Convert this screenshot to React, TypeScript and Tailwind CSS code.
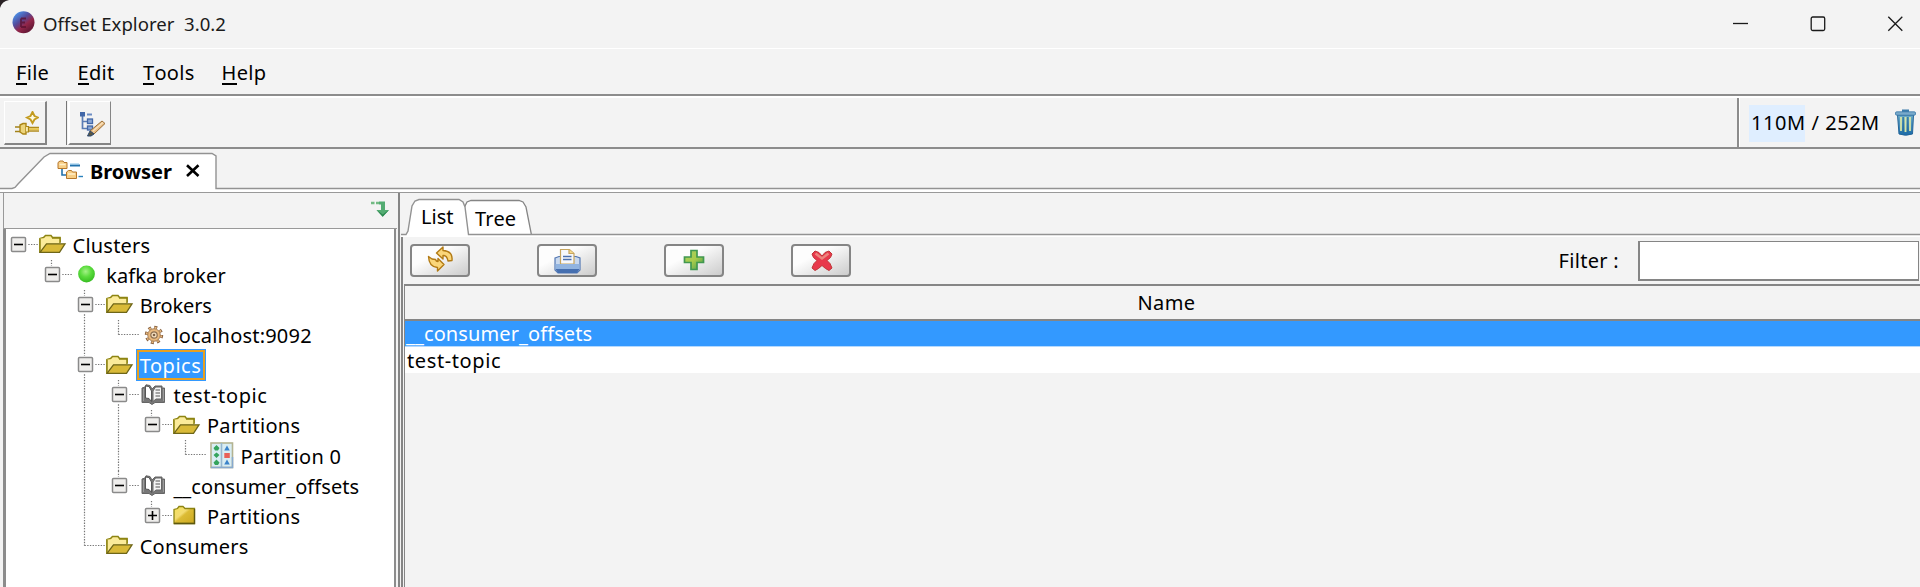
import React from 'react';

type IconKind = 'open' | 'closed' | 'green' | 'gear' | 'book' | 'partition';

interface TreeItem {
  label: string;
  icon: IconKind;
  // one flag per ancestor column: whether its vertical guide passes through this row
  guides: boolean[];
  last?: boolean;
  toggle?: 'minus' | 'plus';
  selected?: boolean;
  tracking?: string;
}

const TREE: TreeItem[] = [
  { label: 'Clusters', icon: 'open', guides: [], toggle: 'minus' },
  { label: 'kafka broker', icon: 'green', guides: [false], last: true, toggle: 'minus', tracking: 'tracking-[0.1px]' },
  { label: 'Brokers', icon: 'open', guides: [false, false], toggle: 'minus', tracking: 'tracking-[-0.1px]' },
  { label: 'localhost:9092', icon: 'gear', guides: [false, false, true], last: true },
  { label: 'Topics', icon: 'open', guides: [false, false], toggle: 'minus', selected: true, tracking: 'tracking-[0.5px]' },
  { label: 'test-topic', icon: 'book', guides: [false, false, true], toggle: 'minus', tracking: 'tracking-[0.6px]' },
  { label: 'Partitions', icon: 'open', guides: [false, false, true, true], last: true, toggle: 'minus', tracking: 'tracking-[0.3px]' },
  { label: 'Partition 0', icon: 'partition', guides: [false, false, true, true, false], last: true, tracking: 'tracking-[0.3px]' },
  { label: '__consumer_offsets', icon: 'book', guides: [false, false, true], last: true, toggle: 'minus', tracking: 'tracking-[0.08px]' },
  { label: 'Partitions', icon: 'closed', guides: [false, false, true, false], last: true, toggle: 'plus', tracking: 'tracking-[0.3px]' },
  { label: 'Consumers', icon: 'open', guides: [false, false], last: true },
];

export default function App() {
  return (
    <div className="flex h-[587px] w-[1920px] flex-col overflow-hidden bg-[#f3f3f3] font-['Noto_Sans','Noto_Sans_CJK_SC',sans-serif] text-[20px] leading-none text-black">
      <TitleBar />
      <MenuBar />
      <Toolbar />
      <TabStrip />
      <div className="flex min-h-0 flex-1">
        <TreePanel />
        <ListPanel />
      </div>
    </div>
  );
}

function TitleBar() {
  return (
    <header className="relative flex h-[49px] shrink-0 items-center border-b border-white pl-[12px] text-[18.6px] text-[#1b1b1b]">
      <svg className="absolute top-0 left-0" width="10" height="10">
        <path d="M0 0H9Q2 1 0 8Z" fill="#2a2225" />
      </svg>
      <svg className="mb-[3px] shrink-0" width="24" height="24" viewBox="0 0 24 24">
        <defs>
          <linearGradient id="ball" x1="0.15" y1="0.1" x2="0.75" y2="0.85">
            <stop offset="0" stopColor="#4a90e8" />
            <stop offset="0.4" stopColor="#534c9c" />
            <stop offset="0.7" stopColor="#93264a" />
            <stop offset="1" stopColor="#6a1a38" />
          </linearGradient>
        </defs>
        <circle cx="11.5" cy="11.2" r="11" fill="url(#ball)" />
        <path d="M9 7.5V16M9 7.5H14M9 11.5H13M9 16H14" stroke="#5c1231" strokeWidth="1.8" fill="none" opacity="0.8" />
      </svg>
      <h1 className="ml-[7px]">Offset Explorer&nbsp; 3.0.2</h1>
      <div className="absolute top-0 right-0 flex h-12 items-center pr-[17px]">
        <svg width="170" height="16" viewBox="0 0 170 16" fill="none" stroke="#1a1a1a" strokeWidth="1.3">
          <path d="M0 7.5H15" />
          <rect x="78.2" y="1" width="13.5" height="13.5" rx="1.5" />
          <path d="M155.3 0.700L169.3 14.700M169.3 0.700L155.3 14.700" />
        </svg>
      </div>
    </header>
  );
}

function MenuBar() {
  return (
    <nav className="flex h-[47px] shrink-0 items-center border-b-2 border-[#8c8c8c] pt-[3px] pl-[16px] tracking-[0.3px]">
      <MenuItem letter="F" rest="ile" className="w-[61.5px]" />
      <MenuItem letter="E" rest="dit" className="w-[65.5px]" />
      <MenuItem letter="T" rest="ools" className="w-[78.5px]" />
      <MenuItem letter="H" rest="elp" className="w-[60px]" />
    </nav>
  );
}

function MenuItem({ letter, rest, className }: { letter: string; rest: string; className: string }) {
  return (
    <button className={`flex text-left ${className}`}>
      <span className="-mb-[1px] h-[22px] border-b-2 border-black">{letter}</span>
      <span>{rest}</span>
    </button>
  );
}

function Toolbar() {
  return (
    <div className="flex h-[53px] shrink-0 border-t-2 border-b-2 border-t-white border-b-[#8c8c8c]">
      <div className="flex flex-1 items-start border-r-2 border-[#8c8c8c] pt-[3px] pl-[4px]">
        <button className="flex h-[44px] w-[43px] items-center justify-center border-t border-r-2 border-b-2 border-l border-t-white border-r-[#858585] border-b-[#858585] border-l-white">
          <PlugIcon />
        </button>
        <div className="ml-[19px] h-[44px] w-px bg-[#777]" />
        <button className="ml-px flex h-[44px] w-[43px] items-center justify-center border-t border-r border-b-2 border-l-2 border-t-white border-r-[#858585] border-b-[#858585] border-l-white">
          <TreeEditIcon />
        </button>
      </div>
      <div className="flex w-[181px] items-center border-l border-white pl-[9px]">
        <div className="mt-[1px] flex h-[37px] w-[56px] items-center bg-[#dfeeff] pl-[2px] whitespace-pre tracking-[0.55px]">
          110M / 252M
        </div>
        <svg className="mb-[1px] ml-[90px]" width="21" height="27" viewBox="0 0 21 27">
          <defs>
            <linearGradient id="can" x1="0" y1="0" x2="0" y2="1">
              <stop offset="0" stopColor="#6eadc8" />
              <stop offset="1" stopColor="#1a6aa8" />
            </linearGradient>
          </defs>
          <path d="M2.5 6H18.5L17.5 25Q10.5 27.5 4 25Z" fill="url(#can)" stroke="#24669a" />
          <path d="M6 8V22M10.5 8V23M15 8V22" stroke="#d6e5a8" strokeWidth="1.8" />
          <path d="M8.2 8V24M12.8 8V24" stroke="#256b96" strokeWidth="0.9" />
          <rect x="7" y="0.5" width="7" height="3" fill="#3c7cab" />
          <rect x="0.5" y="2.8" width="20" height="3.4" rx="1.2" fill="#79aacb" stroke="#3677a8" strokeWidth="0.8" />
        </svg>
      </div>
    </div>
  );
}

function TabStrip() {
  return (
    <div className="relative h-[44px] shrink-0 border-b border-[#999]">
      <svg className="absolute top-0 left-0" width="1920" height="43">
        <path d="M0 39.5H12L15 38.5L18 35L44 8L50 4.5H212L216 7V39.5H1920V43H0Z" fill="#fff" />
        <path d="M0 39.5H12L15 38.5L18 35L44 8L50 4.5H212L216 7V39.5H1920" fill="none" stroke="#929292" strokeWidth="1.4" />
      </svg>
      <div className="relative flex h-full items-start pt-[11px] pl-[57px]">
        <svg width="27" height="21" viewBox="0 0 27 21">
          <path d="M5 7V15H10" fill="none" stroke="#2272ad" strokeWidth="1.6" />
          <path d="M13 5.5H23" stroke="#2272ad" strokeWidth="2" />
          <path d="M13 4H22" stroke="#8cc4e9" strokeWidth="1" />
          <path d="M21.5 16.5H26" stroke="#2a82bd" strokeWidth="1.4" />
          <path d="M1 2.5L3 1H6L7 2.5H10V8.5H1Z" fill="#f8cf86" stroke="#b5772c" />
          <path d="M9.500 12L11.500 10.5H14.500L15.500 12H19.500V18.5H9.500Z" fill="#f8cf86" stroke="#b5772c" />
          <path d="M2.500 4.500H8.500M11 14H18" stroke="#fff0c9" strokeWidth="1.500" />
        </svg>
        <span className="mt-[2px] ml-[6px] w-[94px] font-bold">Browser</span>
        <svg className="mt-[4px] ml-[1px]" width="16" height="14" viewBox="0 0 16 14">
          <path d="M2 1.2L13.500 12M13.500 1.2L2 12" stroke="#000" strokeWidth="2.600" />
        </svg>
      </div>
    </div>
  );
}

function TreePanel() {
  return (
    <aside className="flex w-[397px] shrink-0 flex-col pl-[3px]">
      <div className="flex h-[36px] shrink-0 items-start justify-end border-b border-l border-[#999] pt-[7px] pr-[7px]">
        <svg width="19" height="19" viewBox="0 0 19 19">
          <path d="M0 3H3.500M5 3H8" stroke="#72ba83" strokeWidth="2.400" />
          <path d="M8 1.500H14V10H18L11.700 16.800L5.500 10H10V4.500H8Z" fill="#53ac72" />
          <path d="M5.500 10L11.700 16.800L18 10L15 12L11.700 14.500L8.500 12Z" fill="#2c8850" />
        </svg>
      </div>
      <div className="mr-[1px] min-h-0 flex-1 border-r-2 border-l-[3px] border-[#8c8c8c] bg-white pt-[0.5px] pl-[5px]">
        {TREE.map((item, i) => (
          <TreeRow key={i} item={item} />
        ))}
      </div>
    </aside>
  );
}

function TreeRow({ item }: { item: TreeItem }) {
  const isRoot = item.guides.length === 0;
  return (
    <div className="flex h-[30.15px] items-center">
      {item.guides.map((on, i) => (
        <Guide key={i} d={on ? 'M6.500 0V31' : ''} />
      ))}
      <div className="relative h-full w-[33.6px] shrink-0">
        <Guide d={`${isRoot ? '' : item.last ? 'M6.500 0V15' : 'M6.500 0V31'}M6.500 14.500H28`} />
        {item.toggle && <Toggle kind={item.toggle} />}
      </div>
      <div className="-ml-[6px] flex w-[31px] shrink-0">
        <NodeIcon kind={item.icon} />
      </div>
      <div
        className={`flex h-[30px] shrink-0 items-center whitespace-pre ${item.tracking ?? 'tracking-[0.2px]'} ${
          item.selected
            ? 'mr-1 border-2 border-[#e8a020] bg-[#3399ff] pt-[2px] pr-[2px] pl-[1px] text-white outline outline-[#3399ff]'
            : 'pt-[2px] pl-[3px]'
        }`}
      >
        <Label text={item.label} />
      </div>
    </div>
  );
}

// Underscores sit a little lower than the font draws them.
function Label({ text }: { text: string }) {
  return (
    <span>
      {text.split(/(_+)/).map((part, i) =>
        part.startsWith('_') ? (
          <span key={i} className="relative top-[1px]">
            {part}
          </span>
        ) : (
          part
        ),
      )}
    </span>
  );
}

function Guide({ d }: { d: string }) {
  return (
    <svg className="h-full w-[33.6px] shrink-0" fill="none">
      <path d={d} stroke="#777" strokeWidth="1.200" strokeDasharray="1.350 1.350" />
    </svg>
  );
}

function Toggle({ kind }: { kind: 'minus' | 'plus' }) {
  return (
    <svg className="absolute top-[6px] -left-px" width="17" height="17" viewBox="0 0 17 17">
      <rect width="17" height="17" fill="#fff" />
      <rect x="1.500" y="1.500" width="14" height="14" rx="1" fill="#efeeec" stroke="#8a8a8a" strokeWidth="1.500" />
      <path d={kind === 'plus' ? 'M4 8.500H13M8.500 4V13' : 'M4 8.500H13'} stroke="#000" strokeWidth="1.600" />
    </svg>
  );
}

function NodeIcon({ kind }: { kind: IconKind }) {
  switch (kind) {
    case 'open':
      return (
        <svg className="shrink-0" width="28" height="21" viewBox="0 0 28 21">
          <path d="M1 18V4.500L4.500 3.500L6.500 1.500H12L13.500 3.500H21V8" fill="#fbeb9a" stroke="#8d8412" strokeWidth="1.500" />
          <path d="M1 4.500H21V18H1Z" fill="#fbeb9a" />
          <path d="M1 18.500V4.500M21 9V4H13" fill="none" stroke="#8d8412" strokeWidth="1.500" />
          <path d="M1 18.300L7.500 9.800H26L20.500 18.300Z" fill="#d9ba38" stroke="#6e6618" strokeWidth="1.300" />
        </svg>
      );
    case 'closed':
      return (
        <svg width="24" height="21" viewBox="0 0 24 21">
          <defs>
            <linearGradient id="folder" x1="0" y1="0" x2="1" y2="1">
              <stop offset="0" stopColor="#f6e25a" />
              <stop offset="0.400" stopColor="#f3dc72" />
              <stop offset="0.500" stopColor="#dcbc35" />
              <stop offset="1" stopColor="#cda820" />
            </linearGradient>
          </defs>
          <path d="M1 18.500V4.500L4.500 3.500L6 1.500H10L12 3.500H21.500V18.500Z" fill="url(#folder)" stroke="#8d8412" strokeWidth="1.300" />
          <path d="M1 18.500H21.500V4" fill="none" stroke="#5e5810" strokeWidth="1.300" />
        </svg>
      );
    case 'green':
      return (
        <svg className="ml-[5px]" width="19" height="19" viewBox="0 0 19 19">
          <defs>
            <radialGradient id="lamp" cx="0.450" cy="0.350" r="0.650">
              <stop offset="0" stopColor="#a4f287" />
              <stop offset="0.500" stopColor="#5bdc3d" />
              <stop offset="1" stopColor="#37bd22" />
            </radialGradient>
          </defs>
          <circle cx="9.500" cy="9" r="8.400" fill="url(#lamp)" />
        </svg>
      );
    case 'gear':
      return (
        <svg className="ml-[5px]" width="20" height="20" viewBox="0 0 20 20">
          <circle cx="10" cy="10" r="7.600" fill="none" stroke="#8a6544" strokeWidth="3.200" strokeDasharray="2.985 2.985" />
          <circle cx="10" cy="10" r="6.300" fill="#e9b87c" stroke="#94704c" strokeWidth="0.800" />
          <circle cx="10" cy="10" r="7.400" fill="none" stroke="#e9b87c" strokeWidth="1.600" strokeDasharray="1.800 4.012" strokeDashoffset="-0.500" />
          <circle cx="10" cy="10" r="3.200" fill="#f8e3c2" stroke="#8c6e50" strokeWidth="1.200" />
          <circle cx="10" cy="10" r="1.300" fill="#806246" />
        </svg>
      );
    case 'book':
      return (
        <svg className="ml-[2px]" width="25" height="22" viewBox="0 0 25 22">
          <path d="M1 4V18.500H8L11 20.500L14 18.500H23.500V4H21V2H14L11 5L9 1.500L5 0.800L4 3Z" fill="#777" stroke="#666" strokeWidth="1" />
          <path d="M4.500 2L8 2.500L10.500 7V17.500L8 14.500L4.500 14Z" fill="#fff" stroke="#555" strokeWidth="1" />
          <path d="M12 7L14.500 3H20.500V15H15L12 17.500Z" fill="#f4f4f4" stroke="#666" strokeWidth="1" />
          <path d="M14.500 6H19M14.500 9H19M14.500 12H19" stroke="#888" strokeWidth="1.300" />
          <path d="M2.500 5V17M22.500 5V17" stroke="#a5a5a5" strokeWidth="0.800" />
        </svg>
      );
    case 'partition':
      return (
        <svg className="ml-[3px]" width="24" height="27" viewBox="0 0 24 27">
          <rect x="1" y="1" width="21.500" height="24.500" fill="#d9edf3" stroke="#b3b391" strokeWidth="1.600" />
          <path d="M11.500 1V25.500" stroke="#96b7cf" strokeWidth="1.600" />
          <path d="M1 25.500H22.500V15" fill="none" stroke="#87a9cf" strokeWidth="1.500" />
          <path d="M6.500 3L9.500 6L8 8.500H5L3.500 6ZM6.500 10.500L9.500 13L6.500 16L3.500 13ZM6.500 17.500L9.500 20.500L8 23H5L3.500 20.500Z" fill="#34a45c" />
          <path d="M17 3.500L19.800 8.500H14.200ZM17 17.500L19.800 22.500H14.200Z" fill="#3b83c9" />
          <rect x="14.300" y="11" width="5.500" height="5" fill="#e86158" />
        </svg>
      );
  }
}

function ListPanel() {
  return (
    <section className="ml-[1px] flex min-w-0 flex-1 flex-col border-l-2 border-[#858585] bg-[#f3f3f3]">
      <div className="relative h-[42px] shrink-0">
        <svg className="absolute top-0 left-0" width="1520" height="44">
          <path d="M64 15L67 9L71 7.500H119L123 9L126 14L131.500 42H68Z" fill="#fff" stroke="#858585" strokeWidth="1.300" />
          <path d="M1 41.500H6L8 38L12 13L15 8L19 6.500H59L63 9L65 14L68.500 41.500H1520V44H1V41.500" fill="#fff" />
          <path d="M1 41.500H6L8 38L12 13L15 8L19 6.500H59L63 9L65 14L68.500 41.500H1520" fill="none" stroke="#929292" strokeWidth="1.400" />
        </svg>
        <div className="relative flex pt-[14px] pl-[21px]">
          <span className="w-[54px]">List</span>
          <span className="mt-[2px] tracking-[0.2px]">Tree</span>
        </div>
      </div>
      <div className="ml-[1px] flex min-h-0 flex-1 flex-col border-l-2 border-[#858585]">
        <div className="flex h-[49px] shrink-0 items-center justify-between pr-[1px] pl-[6.500px]">
          <div className="flex gap-[67.1px] pt-[2px]">
            <ToolButton>
              <RefreshIcon />
            </ToolButton>
            <ToolButton>
              <PrinterIcon />
            </ToolButton>
            <ToolButton>
              <PlusIcon />
            </ToolButton>
            <ToolButton>
              <CrossIcon />
            </ToolButton>
          </div>
          <label className="flex items-center gap-[19px] pt-[2px] tracking-[0.3px]">
            Filter :
            <input className="h-[40px] w-[281px] border border-b-2 border-l-2 border-[#858585] bg-white outline-none" />
          </label>
        </div>
        <div className="ml-[1px] flex min-h-0 flex-1 flex-col border-t-2 border-l border-[#858585]">
          <div className="flex h-[35px] shrink-0 items-center justify-center border-b-2 border-[#858585] pt-[1px] pl-[8px] tracking-[0.4px]">Name</div>
          <div className="h-[26px] shrink-0 border-b border-[#b4d9ff] bg-[#3399ff] pt-[3px] pl-[1px] tracking-[0.1px] text-white">
            <Label text="__consumer_offsets" />
          </div>
          <div className="h-[26px] shrink-0 bg-white pt-[4px] pl-[2px] tracking-[0.6px]">test-topic</div>
        </div>
      </div>
    </section>
  );
}

function ToolButton({ children }: { children: React.ReactNode }) {
  return (
    <button className="flex h-[33px] w-[60px] items-center justify-center rounded-[4px] border-2 border-[#858585] bg-linear-to-br from-[#fdfdfd] from-35% to-[#cccccc]">
      {children}
    </button>
  );
}

function RefreshIcon() {
  return (
    <svg className="mb-[4px]" width="26" height="26" viewBox="0 0 26 26">
      <g fill="#fad67a" stroke="#b27a14" strokeWidth="1.400" strokeLinejoin="round">
        <path d="M16 1L9.500 7L16 13V9.500Q20 9 21 15L25 14.500Q26 5 16 4.500Z" />
        <path d="M1.500 10.500L5 13L8.500 13.500Q9 15.500 11 15.500V12.500L17 18.500L10.500 25V21.500Q2 21 1.500 10.500Z" />
      </g>
    </svg>
  );
}

function PrinterIcon() {
  return (
    <svg className="ml-[2px]" width="27" height="26" viewBox="0 0 27 26">
      <path d="M1 10L5 8.500H22L26 10V22L23 25H4L1 22Z" fill="#c9d9ef" stroke="#5377b3" strokeWidth="1.200" />
      <path d="M6.500 16V1.500H15.500L20 5.500V16Z" fill="#f6f8fc" stroke="#c6a55e" strokeWidth="1.200" />
      <path d="M15 1.500V5.500H20" fill="#f6d98c" stroke="#c6a55e" strokeWidth="1.200" />
      <path d="M9 8.500H17.500M9 11.500H17.500" stroke="#4c70ae" strokeWidth="1.400" />
      <path d="M1.500 16H25.500V21.500L23 24.500H4L1.500 21.500Z" fill="#91b4e0" />
      <path d="M1.500 21H25.500L23 25H4Z" fill="#456fb0" />
    </svg>
  );
}

function PlusIcon() {
  return (
    <svg className="mb-[1px]" width="22" height="22" viewBox="0 0 22 22">
      <defs>
        <linearGradient id="plus" x1="0" y1="0" x2="1" y2="1">
          <stop offset="0" stopColor="#a6d065" />
          <stop offset="0.500" stopColor="#a9cc4b" />
          <stop offset="1" stopColor="#3f9a50" />
        </linearGradient>
      </defs>
      <path d="M8 1.500H14V8H20.500V13.500H14V20.500H8V13.500H1.500V8H8Z" fill="url(#plus)" stroke="#419850" strokeWidth="1.700" />
    </svg>
  );
}

function CrossIcon() {
  return (
    <svg className="ml-[2px]" width="22" height="22" viewBox="0 0 22 22">
      <path
        d="M4 1L8 2.500L11 6L14 2.500L18 1L21 4L19.500 7.500L16 10.500L19 13.500L21 18L18 20.500L14.500 18.500L11 15.500L7.500 18.500L4 20.500L1 18L3 13.500L6 10.500L2.500 7.500L1 4Z"
        fill="#e8394c"
        stroke="#bf3437"
        strokeWidth="1"
      />
      <path d="M4.500 3.500L11 8.500L17.500 3.500" fill="none" stroke="#ec857d" strokeWidth="2.500" />
    </svg>
  );
}

function PlugIcon() {
  return (
    <svg className="mt-[1px] ml-[4px]" width="24" height="24" viewBox="0 0 24 24" fill="none">
      <path d="M0 16H5M0 20.500H5" stroke="#a3821a" strokeWidth="1.500" />
      <path d="M5 14L8 12.500H11V23H8L5 21Z" fill="#ecd47c" stroke="#ab8516" strokeWidth="1.400" />
      <path d="M11 15.500H13.500V21H11" fill="#f8eaae" stroke="#ab8516" strokeWidth="1.200" />
      <path d="M14 16.500H24M14 20H24" stroke="#b08a1c" strokeWidth="1.500" />
      <path d="M14 18.200H24" stroke="#e7c54f" strokeWidth="2" />
      <path d="M17.500 1L19.500 5L23 6.500L19.500 8.500L17.500 12L15.500 8.500L12 6.500L15.500 5Z" fill="#fffbe2" stroke="#c39b1f" strokeWidth="1.900" />
    </svg>
  );
}

function TreeEditIcon() {
  return (
    <svg className="mt-[3px] ml-[4px]" width="27" height="26" viewBox="0 0 27 26" fill="none">
      <path d="M3.500 3V17.500H9M3.500 10.500H9" stroke="#5a7cb4" strokeWidth="1.700" />
      <path d="M8 3.500H13" stroke="#6c8dc4" strokeWidth="2" />
      <rect x="1" y="1" width="5" height="4.500" fill="#4268a8" />
      <rect x="8.500" y="8" width="5" height="4.500" fill="#89a6d4" stroke="#4268a8" strokeWidth="1.300" />
      <rect x="8.500" y="15" width="5" height="4" fill="#89a6d4" stroke="#4268a8" strokeWidth="1.300" />
      <path d="M11 20L23 10L26 12.500L15 23Z" fill="#e8be87" stroke="#9b6e35" strokeWidth="1" />
      <path d="M14 20L24 11.500" stroke="#fae3bf" strokeWidth="1.300" />
      <path d="M11 20L15 23L12 25L8.500 25Z" fill="#5a5640" stroke="#2c4a73" strokeWidth="1" />
    </svg>
  );
}
